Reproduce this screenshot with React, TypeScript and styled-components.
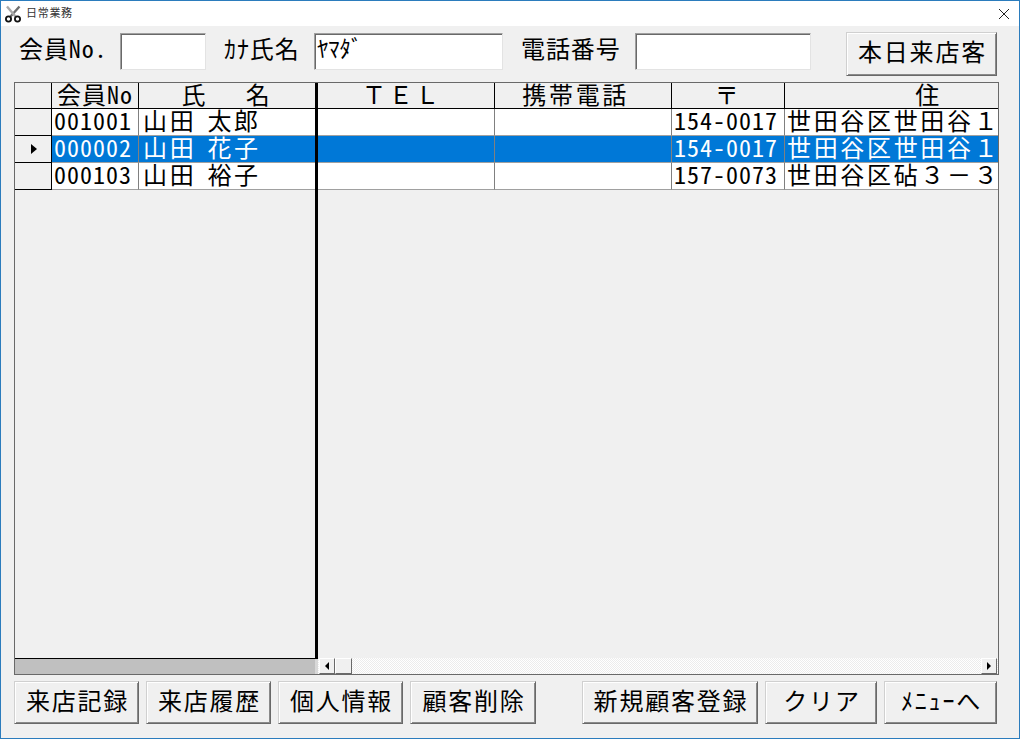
import styled, { createGlobalStyle } from "styled-components";

const GlobalStyle = createGlobalStyle`
  html, body {
    margin: 0;
    padding: 0;
    background: #f0f0f0;
  }
  * {
    box-sizing: border-box;
  }
`;

const Window = styled.div`
  width: 1020px;
  height: 739px;
  display: flex;
  flex-direction: column;
  border: 1px solid #2b7cbd;
  background: #f0f0f0;
  color: #000;
  font-family: "Noto Sans CJK JP", sans-serif;
  font-feature-settings: "hwid";
  overflow: hidden;
`;

const TitleBar = styled.div`
  height: 25px;
  flex: none;
  display: flex;
  align-items: center;
  padding: 0 10px 0 3px;
  background: #fff;
`;

const TitleText = styled.span`
  margin: 0 0 4px 4px;
  font-size: 11px;
  line-height: 14px;
  letter-spacing: 0.7px;
  color: #333;
`;

const CloseIcon = styled.svg`
  margin-left: auto;
`;

const Content = styled.div`
  flex: 1;
  display: flex;
  flex-direction: column;
  padding: 6px 20px 15px 13px;
`;

const Toolbar = styled.div`
  height: 50px;
  flex: none;
  display: flex;
  align-items: flex-start;
`;

const Label = styled.label<{ $w: number; $ml: number }>`
  width: ${(p) => p.$w}px;
  margin-left: ${(p) => p.$ml}px;
  flex: none;
  height: 31px;
  line-height: 31px;
  font-size: 24px;
  letter-spacing: 0.9px;
  white-space: pre;
`;

const Field = styled.input<{ $w: number }>`
  width: ${(p) => p.$w}px;
  height: 37px;
  margin-top: 1px;
  flex: none;
  padding: 0 0 8px 2px;
  background: #fff;
  border: 1px solid;
  border-color: #a0a0a0 #e3e3e3 #e3e3e3 #a0a0a0;
  box-shadow: inset 1px 1px 0 #696969;
  border-radius: 0;
  outline: none;
  font-family: inherit;
  font-feature-settings: "hwid";
  font-size: 22.6px;
  color: #000;
`;

const Button = styled.button<{ $w: number }>`
  width: ${(p) => p.$w}px;
  flex: none;
  padding: 0 0 5px 2px;
  background: #f0f0f0;
  border: 1px solid;
  border-color: #d0d0d0 #696969 #696969 #d0d0d0;
  box-shadow: inset 1px 1px 0 #fff, inset -1px -1px 0 #8a8a8a;
  border-radius: 0;
  font-family: inherit;
  font-feature-settings: "hwid";
  font-size: 24px;
  line-height: 30px;
  letter-spacing: 1.8px;
  color: #000;
  white-space: pre;
`;

const TodayButton = styled(Button)`
  height: 44px;
  margin-left: auto;
  margin-right: 2px;
  padding-bottom: 6px;
`;

const Grid = styled.div`
  height: 593px;
  flex: none;
  display: flex;
  border: 1px solid #696969;
`;

const FrozenSide = styled.div`
  width: 303px;
  flex: none;
  display: flex;
  flex-direction: column;
`;

const FrozenPane = styled.div`
  flex: 1;
  border-right: 3px solid #000;
  border-bottom: 1px solid #000;
`;

const FrozenBar = styled.div`
  height: 15px;
  flex: none;
  background: linear-gradient(to right, #c0c0c0 300px, #d8d8d8 300px);
`;

const ScrollSide = styled.div`
  flex: 1;
  min-width: 0;
  display: flex;
  flex-direction: column;
`;

const ScrollPane = styled.div`
  flex: 1;
  overflow: hidden;
`;

const Row = styled.div<{ $header?: boolean; $selected?: boolean }>`
  width: max-content;
  height: ${(p) => (p.$header ? 26 : 27)}px;
  display: flex;
  background: ${(p) => (p.$header ? "#f0f0f0" : p.$selected ? "#0078d7" : "#fff")};
  color: ${(p) => (p.$selected ? "#fff" : "#000")};
`;

// $half: half-width digits with their own pitch; $wide: keep full-width latin and kana as is
const Cell = styled.div<{ $w: number; $header?: boolean; $half?: boolean; $wide?: boolean }>`
  width: ${(p) => p.$w}px;
  flex: none;
  padding-left: ${(p) => (p.$header ? 0 : 2)}px;
  border-right: 1px solid ${(p) => (p.$header ? "#000" : "#808080")};
  border-bottom: 1px solid ${(p) => (p.$header ? "#000" : "#a0a0a0")};
  font-size: 24px;
  font-feature-settings: ${(p) => (p.$wide ? "normal" : '"hwid"')};
  letter-spacing: ${(p) => (p.$half ? 1 : 2.67)}px;
  line-height: 22px;
  text-align: ${(p) => (p.$header ? "center" : "left")};
  white-space: pre;
`;

const NameCell = styled(Cell)`
  padding-left: ${(p) => (p.$header ? 0 : 4)}px;
  border-right: none;
  word-spacing: 3px;
`;

const RowHead = styled.div`
  width: 37px;
  flex: none;
  display: flex;
  align-items: center;
  justify-content: center;
  padding-left: 2px;
  background: #f0f0f0;
  border-right: 1px solid #000;
  border-bottom: 1px solid #000;
`;

const CurrentMark = styled.span`
  width: 0;
  height: 0;
  border-left: 6px solid #000;
  border-top: 5px solid transparent;
  border-bottom: 5px solid transparent;
`;

const Scrollbar = styled.div`
  height: 16px;
  flex: none;
  display: flex;
  padding: 0 1px;
  background: repeating-conic-gradient(#fff 0 25%, #ececec 0 50%) 0 0 / 2px 2px;
`;

const ScrollButton = styled.div`
  width: 16px;
  flex: none;
  display: flex;
  align-items: center;
  justify-content: center;
  background: #f0f0f0;
  border: 1px solid;
  border-color: #fff #696969 #696969 #fff;
`;

const ScrollThumb = styled(ScrollButton)`
  width: 17px;
`;

const ScrollFill = styled.div`
  flex: 1;
`;

const ArrowLeft = styled.span`
  width: 0;
  height: 0;
  border-right: 4px solid #000;
  border-top: 4px solid transparent;
  border-bottom: 4px solid transparent;
`;

const ArrowRight = styled.span`
  width: 0;
  height: 0;
  border-left: 4px solid #000;
  border-top: 4px solid transparent;
  border-bottom: 4px solid transparent;
`;

const ActionBar = styled.div`
  height: 43px;
  margin-top: 6px;
  flex: none;
  display: flex;
  gap: 7px;
`;

const ActionGap = styled.div`
  width: 32px;
  flex: none;
`;

const scrollCols = [177, 177, 113, 288];

const members = [
  { no: "001001", name: "山田 太郎", zip: "154-0017", addr: "世田谷区世田谷１" },
  { no: "000002", name: "山田 花子", zip: "154-0017", addr: "世田谷区世田谷１", selected: true },
  { no: "000103", name: "山田 裕子", zip: "157-0073", addr: "世田谷区砧３－３" },
];

function ScissorsIcon() {
  return (
    <svg width="18" height="18" viewBox="0 0 18 18">
      <path d="M15.5 1.5 6.5 11.5" stroke="#6e6e6e" strokeWidth="2.4" fill="none" />
      <path d="M3 1.5 11.5 11.5" stroke="#a8a8a8" strokeWidth="2.4" fill="none" />
      <circle cx="4.5" cy="14" r="2.6" stroke="#111" strokeWidth="1.8" fill="#fff" />
      <circle cx="13.5" cy="14" r="2.6" stroke="#111" strokeWidth="1.8" fill="#fff" />
    </svg>
  );
}

export default function App() {
  return (
    <>
      <GlobalStyle />
      <Window>
        <TitleBar>
          <ScissorsIcon />
          <TitleText>日常業務</TitleText>
          <CloseIcon width="10" height="10" viewBox="0 0 10 10">
            <path d="M0 0 10 10M10 0 0 10" stroke="#222" strokeWidth="1" fill="none" />
          </CloseIcon>
        </TitleBar>

        <Content>
          <Toolbar>
            <Label $w={101} $ml={5}>会員No.</Label>
            <Field $w={86} readOnly />
            <Label $w={90} $ml={18}>ｶﾅ氏名</Label>
            <Field $w={189} readOnly defaultValue="ﾔﾏﾀﾞ" />
            <Label $w={114} $ml={18}>電話番号</Label>
            <Field $w={176} readOnly />
            <TodayButton $w={151}>本日来店客</TodayButton>
          </Toolbar>

          <Grid>
            <FrozenSide>
              <FrozenPane>
                <Row $header>
                  <RowHead />
                  <Cell $w={87} $header $half>会員No</Cell>
                  <NameCell $w={176} $header $wide>{"氏　 名"}</NameCell>
                </Row>
                {members.map((m) => (
                  <Row key={m.no} $selected={m.selected}>
                    <RowHead>{m.selected && <CurrentMark />}</RowHead>
                    <Cell $w={87} $half>{m.no}</Cell>
                    <NameCell $w={176} $wide>{m.name}</NameCell>
                  </Row>
                ))}
              </FrozenPane>
              <FrozenBar />
            </FrozenSide>

            <ScrollSide>
              <ScrollPane>
                <Row $header>
                  <Cell $w={scrollCols[0]} $header $wide>{"ＴＥＬ "}</Cell>
                  <Cell $w={scrollCols[1]} $header>{"携帯電話 "}</Cell>
                  <Cell $w={scrollCols[2]} $header>〒</Cell>
                  <Cell $w={scrollCols[3]} $header>住</Cell>
                </Row>
                {members.map((m) => (
                  <Row key={m.no} $selected={m.selected}>
                    <Cell $w={scrollCols[0]} />
                    <Cell $w={scrollCols[1]} />
                    <Cell $w={scrollCols[2]} $half>{m.zip}</Cell>
                    <Cell $w={scrollCols[3]} $wide>{m.addr}</Cell>
                  </Row>
                ))}
              </ScrollPane>
              <Scrollbar>
                <ScrollButton>
                  <ArrowLeft />
                </ScrollButton>
                <ScrollThumb />
                <ScrollFill />
                <ScrollButton>
                  <ArrowRight />
                </ScrollButton>
              </Scrollbar>
            </ScrollSide>
          </Grid>

          <ActionBar>
            <Button $w={125}>来店記録</Button>
            <Button $w={125}>来店履歴</Button>
            <Button $w={125}>個人情報</Button>
            <Button $w={126}>顧客削除</Button>
            <ActionGap />
            <Button $w={176}>新規顧客登録</Button>
            <Button $w={112}>クリア</Button>
            <Button $w={113}>ﾒﾆｭｰへ</Button>
          </ActionBar>
        </Content>
      </Window>
    </>
  );
}
